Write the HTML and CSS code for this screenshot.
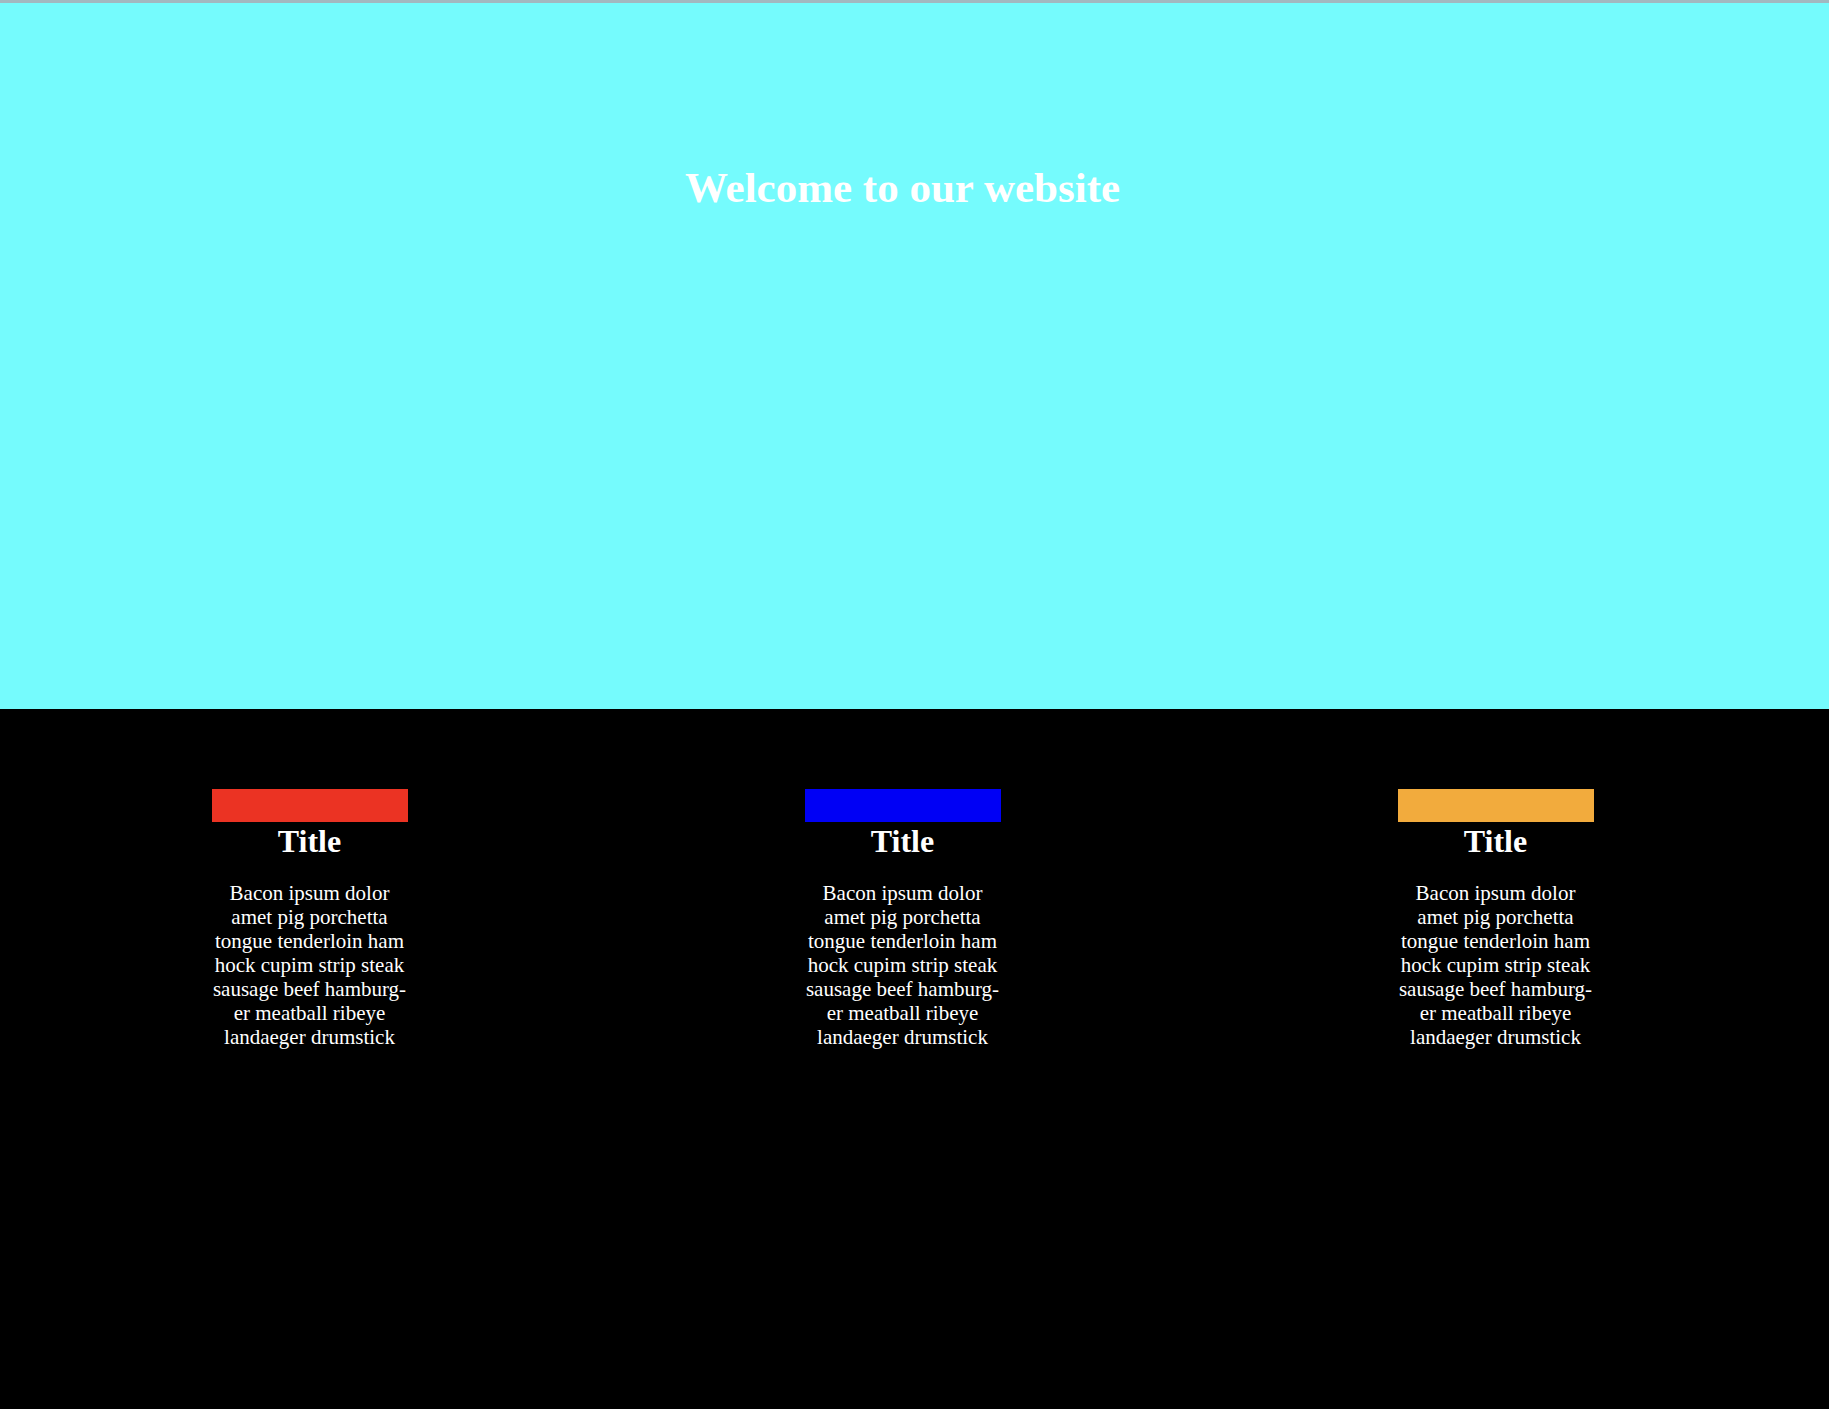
FILE: index.html
```html
<!DOCTYPE html>
<html lang="en">
<head>
<meta charset="utf-8">
<title>Welcome</title>
<link rel="stylesheet" href="styles.css">
</head>
<body>
<header class="hero">
  <h1 class="hero-title">Welcome to our website</h1>
</header>
<main class="features">
  <section class="card">
    <div class="card-bar bar-red"></div>
    <h2 class="card-title">Title</h2>
    <p class="card-text">Bacon ipsum dolor amet pig porchetta tongue tenderloin ham hock cupim strip steak sausage beef hamburg&shy;er meatball ribeye landaeger drumstick</p>
  </section>
  <section class="card">
    <div class="card-bar bar-blue"></div>
    <h2 class="card-title">Title</h2>
    <p class="card-text">Bacon ipsum dolor amet pig porchetta tongue tenderloin ham hock cupim strip steak sausage beef hamburg&shy;er meatball ribeye landaeger drumstick</p>
  </section>
  <section class="card">
    <div class="card-bar bar-orange"></div>
    <h2 class="card-title">Title</h2>
    <p class="card-text">Bacon ipsum dolor amet pig porchetta tongue tenderloin ham hock cupim strip steak sausage beef hamburg&shy;er meatball ribeye landaeger drumstick</p>
  </section>
</main>
</body>
</html>
```

FILE: styles.css
```css
html, body {
  margin: 0;
  padding: 0;
  height: 100%;
}

body {
  background: #000;
  border-top: 3px solid #a2b8c0;
  box-sizing: border-box;
  font-family: "Liberation Serif", "Times New Roman", serif;
  color: #fff;
  overflow: hidden;
}

.hero {
  background: #75fbfd;
  height: 706px;
  display: flex;
  justify-content: center;
  align-items: flex-start;
  padding-left: 13px;
  padding-right: 37px;
}

.hero-title {
  margin: 160px 0 0;
  font-size: 43px;
  font-weight: bold;
  color: #fff;
}

.features {
  display: grid;
  grid-template-columns: repeat(3, 1fr);
  padding: 80px 37px 0 13px;
}

.card {
  width: 196px;
  justify-self: center;
  text-align: center;
}

.card-bar {
  height: 33px;
}

.bar-red { background: #eb3323; }
.bar-blue { background: #0000f5; }
.bar-orange { background: #f2ab3d; }

.card-title {
  margin: 0;
  font-size: 32px;
  font-weight: bold;
  line-height: 38px;
}

.card-text {
  margin: 21px 0 0;
  font-size: 21px;
  line-height: 24px;
}
```
